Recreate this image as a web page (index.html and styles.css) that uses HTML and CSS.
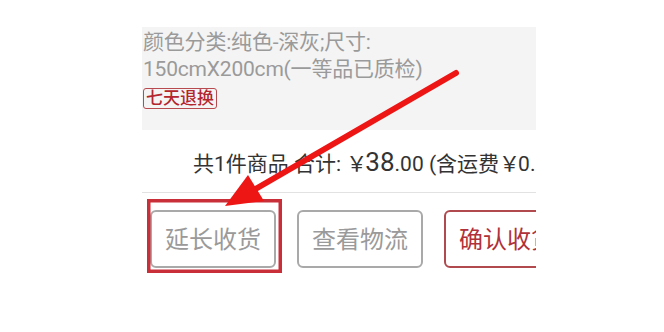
FILE: index.html
```html
<!DOCTYPE html>
<html>
<head>
<title>订单详情</title>
<meta charset="UTF-8">
<meta name="viewport" content="width=device-width, initial-scale=1.0">
<link rel="stylesheet" href="styles.css">
</head>
<body>
<div class="order">
    <div class="sku">
        <p class="sku-text">颜色分类:纯色-深灰;尺寸:<br>150cmX200cm(一等品已质检)</p>
        <span class="tag">七天退换</span>
    </div>
    <div class="total">共1件商品 合计: <span class="yen">￥</span><span class="big">38</span>.00 (含运费<span class="yen">￥</span>0.00)</div>
    <div class="actions">
        <button class="btn">延长收货</button>
        <button class="btn">查看物流</button>
        <button class="btn btn-primary">确认收货</button>
    </div>
</div>
<svg class="annot" width="664" height="332" viewBox="0 0 664 332">
    <rect x="148.75" y="200.75" width="131.5" height="70.5" fill="none" stroke="#c92f38" stroke-width="3.5"/>
    <line x1="456" y1="73" x2="252" y2="191" stroke="#ee1515" stroke-width="6" stroke-linecap="round"/>
    <polygon points="225,206 248,175 264,201" fill="#ee1515"/>
</svg>
</body>
</html>
```

FILE: styles.css
```css
body {
    margin: 0;
    background: #fff;
    font-family: Roboto, "Noto Sans CJK SC", sans-serif;
}
.order {
    width: 394px;
    margin: 27px 0 0 142px;
    overflow: hidden;
}
.sku {
    background-color: #f4f4f4;
    padding: 2px 0 21px 1px;
}
.sku-text {
    margin: 0;
    font-size: 21px;
    line-height: 27px;
    color: #9a9a9a;
    letter-spacing: -0.2px;
}
.tag {
    display: inline-block;
    margin-top: 5px;
    padding: 1px 2px;
    font-size: 17px;
    line-height: 17px;
    font-weight: 500;
    color: #b3262d;
    border: 1px solid #b74a4f;
    border-radius: 3px;
}
.total {
    margin-top: 17px;
    padding: 0 0 13px 51px;
    font-size: 21px;
    line-height: 30px;
    color: #333;
    white-space: nowrap;
    border-bottom: 1px solid #e2e2e2;
}
.total .yen {
    font-family: "Noto Sans CJK SC", sans-serif;
    margin-right: -2px;
}
.total .big {
    font-size: 26px;
    line-height: 1;
}
.actions {
    display: flex;
    gap: 21px;
    padding: 17px 0 0 8px;
}
.btn {
    flex-shrink: 0;
    width: 126px;
    height: 58px;
    padding: 0 0 4px;
    font-family: inherit;
    font-size: 24px;
    color: #9a9a9a;
    background: #fff;
    border: 2px solid #a9a9a9;
    border-radius: 6px;
}
.btn-primary {
    color: #b0313a;
    border-color: #b04a4f;
}
.annot {
    position: absolute;
    top: 0;
    left: 0;
    pointer-events: none;
}
```
